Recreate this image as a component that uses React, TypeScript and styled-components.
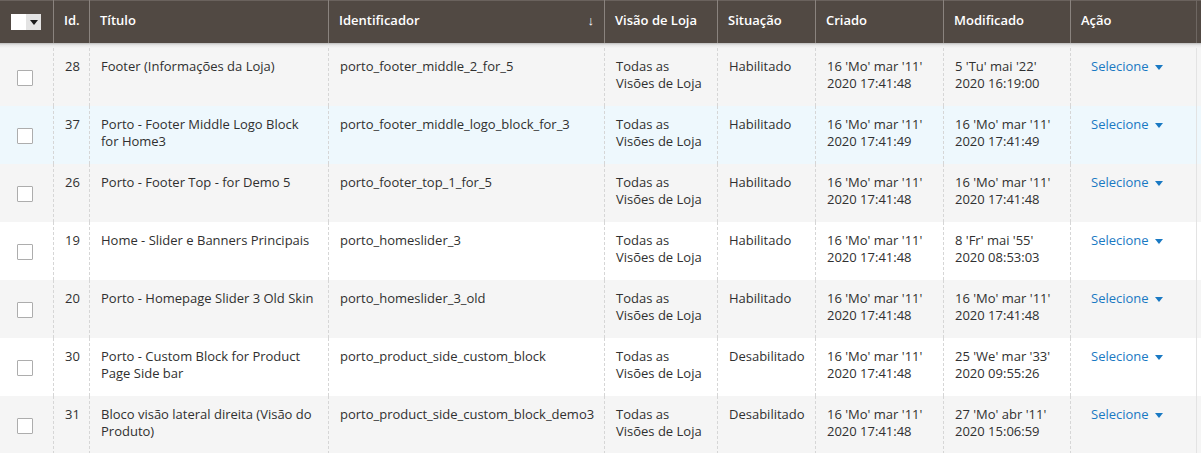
import React from "react";
import styled, { createGlobalStyle } from "styled-components";

const Global = createGlobalStyle`
  html, body { margin: 0; padding: 0; background: #ffffff; }
  body { font-family: "Open Sans", "Noto Sans", sans-serif; color: #303030; }
`;

const Table = styled.table`
  width: 1201px;
  border-collapse: separate;
  border-spacing: 0;
  table-layout: fixed;
  font-size: 13px;
`;

const Th = styled.th<{ $first?: boolean; $edge?: boolean }>`
  height: 48px;
  box-sizing: border-box;
  padding: 11px 11px 0;
  text-align: left;
  vertical-align: top;
  color: #ffffff;
  font-weight: 600;
  font-size: 13px;
  line-height: 18px;
  background: linear-gradient(
    to bottom,
    #6a625d 0,
    #6a625d 1px,
    #514943 1px,
    #514943 43px,
    #bdbdbd 43px,
    #e6e6e6 45px,
    #f5f5f5 48px
  );
  position: relative;
  white-space: nowrap;
  &::before {
    content: "";
    display: ${(p) => (p.$first ? "none" : "block")};
    position: absolute;
    left: 0;
    top: 0;
    width: 1px;
    height: 43px;
    background: ${(p) => (p.$edge ? "#6e6762" : "#8a837e")};
  }
`;

const SortArrow = styled.span`
  position: absolute;
  right: 10px;
  top: 11px;
  font-weight: 400;
  font-size: 13px;
  color: #ffffff;
`;

const Multi = styled.div`
  display: flex;
  width: 30px;
  height: 16px;
  margin-top: 3px;
`;

const MultiBox = styled.div`
  width: 15px;
  height: 16px;
  background: #ffffff;
`;

const MultiBtn = styled.div`
  width: 15px;
  height: 16px;
  background: #e3e3e3;
  display: flex;
  align-items: center;
  justify-content: center;
  &::after {
    content: "";
    border-left: 4px solid transparent;
    border-right: 4px solid transparent;
    border-top: 5px solid #1a1a1a;
  }
`;

const Row = styled.tr<{ $bg: string }>`
  background: ${(p) => p.$bg};
`;

const Td = styled.td<{ $action?: boolean; $nowrap?: boolean }>`
  height: 58px;
  box-sizing: border-box;
  padding: 10px 11px 12px ${(p) => (p.$action ? "20px" : "11px")};
  vertical-align: top;
  line-height: 17px;
  border-left: 1px dashed #d6d6d6;
  white-space: ${(p) => (p.$nowrap ? "nowrap" : "normal")};
  overflow: visible;
`;

const EdgeTd = styled.td`
  border-left: 1px solid #e3e3e3;
  padding: 0;
`;

const CheckCell = styled.td`
  height: 58px;
  box-sizing: border-box;
  padding: 0;
  vertical-align: middle;
  text-align: center;
`;

const Check = styled.span`
  display: inline-block;
  width: 16px;
  height: 16px;
  box-sizing: border-box;
  border: 1px solid #adadad;
  border-radius: 1px;
  background: #ffffff;
  margin-right: 3px;
  vertical-align: middle;
`;

const Action = styled.span`
  color: #1979c3;
  display: inline-flex;
  align-items: center;
  gap: 6px;
  &::after {
    content: "";
    border-left: 4.5px solid transparent;
    border-right: 4.5px solid transparent;
    border-top: 5px solid #1979c3;
    margin-top: 1px;
  }
`;

type Item = {
  id: string;
  title: string;
  ident: string;
  status: string;
  created: [string, string];
  modified: [string, string];
};

const items: Item[] = [
  { id: "28", title: "Footer (Informações da Loja)", ident: "porto_footer_middle_2_for_5", status: "Habilitado", created: ["16 'Mo' mar '11'", "2020 17:41:48"], modified: ["5 'Tu' mai '22'", "2020 16:19:00"] },
  { id: "37", title: "Porto - Footer Middle Logo Block for Home3", ident: "porto_footer_middle_logo_block_for_3", status: "Habilitado", created: ["16 'Mo' mar '11'", "2020 17:41:49"], modified: ["16 'Mo' mar '11'", "2020 17:41:49"] },
  { id: "26", title: "Porto - Footer Top - for Demo 5", ident: "porto_footer_top_1_for_5", status: "Habilitado", created: ["16 'Mo' mar '11'", "2020 17:41:48"], modified: ["16 'Mo' mar '11'", "2020 17:41:48"] },
  { id: "19", title: "Home - Slider e Banners Principais", ident: "porto_homeslider_3", status: "Habilitado", created: ["16 'Mo' mar '11'", "2020 17:41:48"], modified: ["8 'Fr' mai '55'", "2020 08:53:03"] },
  { id: "20", title: "Porto - Homepage Slider 3 Old Skin", ident: "porto_homeslider_3_old", status: "Habilitado", created: ["16 'Mo' mar '11'", "2020 17:41:48"], modified: ["16 'Mo' mar '11'", "2020 17:41:48"] },
  { id: "30", title: "Porto - Custom Block for Product Page Side bar", ident: "porto_product_side_custom_block", status: "Desabilitado", created: ["16 'Mo' mar '11'", "2020 17:41:48"], modified: ["25 'We' mar '33'", "2020 09:55:26"] },
  { id: "31", title: "Bloco visão lateral direita (Visão do Produto)", ident: "porto_product_side_custom_block_demo3", status: "Desabilitado", created: ["16 'Mo' mar '11'", "2020 17:41:48"], modified: ["27 'Mo' abr '11'", "2020 15:06:59"] },
];

const widths = [53, 36, 239, 276, 113, 98, 128, 127, 126, 5];

const rowBg = (i: number) => (i === 1 ? "#eef8fd" : i % 2 === 0 ? "#f5f5f5" : "#ffffff");

export default function App() {
  return (
    <>
      <Global />
      <Table>
        <colgroup>
          {widths.map((w, i) => (
            <col key={i} style={{ width: w }} />
          ))}
        </colgroup>
        <thead>
          <tr>
            <Th $first>
              <Multi>
                <MultiBox />
                <MultiBtn />
              </Multi>
            </Th>
            <Th>Id.</Th>
            <Th>Título</Th>
            <Th>
              Identificador
              <SortArrow>↓</SortArrow>
            </Th>
            <Th>Visão de Loja</Th>
            <Th>Situação</Th>
            <Th>Criado</Th>
            <Th>Modificado</Th>
            <Th>Ação</Th>
            <Th $edge />
          </tr>
        </thead>
        <tbody>
          {items.map((it, i) => (
            <Row key={it.id} $bg={rowBg(i)}>
              <CheckCell>
                <Check />
              </CheckCell>
              <Td $nowrap>{it.id}</Td>
              <Td>{it.title}</Td>
              <Td $nowrap>{it.ident}</Td>
              <Td $nowrap>
                Todas as
                <br />
                Visões de Loja
              </Td>
              <Td $nowrap>{it.status}</Td>
              <Td $nowrap>
                {it.created[0]}
                <br />
                {it.created[1]}
              </Td>
              <Td $nowrap>
                {it.modified[0]}
                <br />
                {it.modified[1]}
              </Td>
              <Td $action $nowrap>
                <Action>Selecione</Action>
              </Td>
              <EdgeTd />
            </Row>
          ))}
        </tbody>
      </Table>
    </>
  );
}
